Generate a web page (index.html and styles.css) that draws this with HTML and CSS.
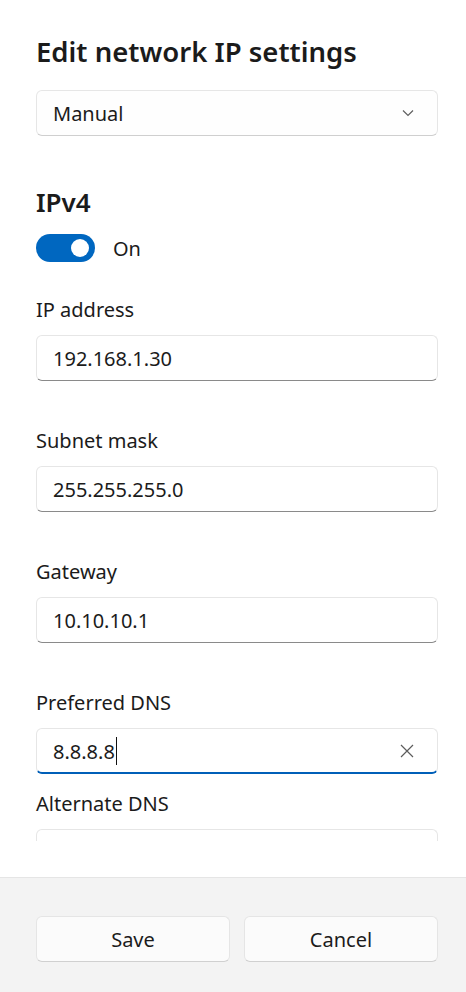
FILE: index.html
```html
<!DOCTYPE html>
<html lang="en">
<head>
<meta charset="utf-8">
<title>Edit network IP settings</title>
<link rel="stylesheet" href="styles.css">
</head>
<body>
<div class="dialog">
  <div class="content">
    <h1 class="title">Edit network IP settings</h1>
    <div class="select">
      <span>Manual</span>
      <svg class="chevron" width="12" height="8" viewBox="0 0 12 8"><path d="M1 1.5 L6 6.5 L11 1.5" fill="none" stroke="#5f5f5f" stroke-width="1.2"/></svg>
    </div>
    <h2 class="section">IPv4</h2>
    <div class="toggle-row">
      <span class="toggle"><span class="knob"></span></span>
      <span class="toggle-label">On</span>
    </div>
    <div class="field">
      <div class="label">IP address</div>
      <div class="input">192.168.1.30</div>
    </div>
    <div class="field">
      <div class="label">Subnet mask</div>
      <div class="input">255.255.255.0</div>
    </div>
    <div class="field">
      <div class="label">Gateway</div>
      <div class="input">10.10.10.1</div>
    </div>
    <div class="field field-focus">
      <div class="label">Preferred DNS</div>
      <div class="input focused"><span class="value">8.8.8.8</span><span class="caret"></span>
        <svg class="clear" width="14" height="14" viewBox="0 0 14 14"><path d="M1 1 L13 13 M13 1 L1 13" fill="none" stroke="#5c5c5c" stroke-width="1.2"/></svg>
      </div>
    </div>
    <div class="field">
      <div class="label">Alternate DNS</div>
      <div class="input"></div>
    </div>
  </div>
  <div class="spacer"></div>
  <div class="footer">
    <button class="btn">Save</button>
    <button class="btn">Cancel</button>
  </div>
</div>
</body>
</html>
```
FILE: styles.css
```css
html, body {
  margin: 0;
  padding: 0;
  background: #ffffff;
}
body {
  font-family: "Noto Sans", "Open Sans", sans-serif;
  color: #1b1b1b;
  font-size: 20px;
}
.dialog {
  width: 466px;
  height: 992px;
  display: flex;
  flex-direction: column;
  overflow: hidden;
}
.content {
  height: 841px;
  overflow: hidden;
  padding: 0 28px 0 36px;
  display: flex;
  flex-direction: column;
  flex-shrink: 0;
  box-sizing: border-box;
}
.content > * {
  flex-shrink: 0;
}
.title {
  margin: 32px 0 0 0;
  font-size: 27.5px;
  font-weight: 600;
  line-height: 40px;
}
.select {
  margin-top: 18px;
  height: 46px;
  box-sizing: border-box;
  border: 1px solid #e6e6e6;
  border-bottom-color: #cfcfcf;
  border-radius: 6px;
  background: #fefefe;
  display: flex;
  align-items: center;
  justify-content: space-between;
  padding: 0 23px 0 16px;
}
.chevron {
  display: block;
}
.section {
  margin: 48px 0 0 0;
  font-size: 26px;
  font-weight: 600;
  line-height: 36px;
}
.toggle-row {
  margin-top: 14px;
  height: 28px;
  display: flex;
  align-items: center;
  gap: 18px;
}
.toggle {
  width: 59px;
  height: 28px;
  border-radius: 14px;
  background: #0067c0;
  display: flex;
  align-items: center;
  justify-content: flex-end;
  padding-right: 6px;
  box-sizing: border-box;
}
.knob {
  width: 18px;
  height: 18px;
  border-radius: 50%;
  background: #ffffff;
}
.field {
  margin-top: 34px;
  display: flex;
  flex-direction: column;
}
.field + .field {
  margin-top: 46px;
}
.field-focus + .field {
  margin-top: 16px;
}
.label {
  line-height: 28px;
  height: 28px;
}
.input {
  margin-top: 11px;
  height: 46px;
  flex-shrink: 0;
  box-sizing: border-box;
  border: 1px solid #e6e6e6;
  border-bottom-color: #8a8a8a;
  border-radius: 6px;
  background: #ffffff;
  padding: 0 16px;
  display: flex;
  align-items: center;
}
.input.focused {
  border-bottom: 2px solid #005fb8;
  padding-top: 1px;
}
.value {
  white-space: pre;
}
.caret {
  width: 1.5px;
  height: 28px;
  background: #111;
  margin-left: 1px;
}
.clear {
  margin-left: auto;
  margin-right: 7px;
}
.spacer {
  height: 36px;
  flex-shrink: 0;
  border-bottom: 1px solid #e5e5e5;
}
.footer {
  flex: 1;
  background: #f3f3f3;
  display: flex;
  gap: 14px;
  padding: 38px 28px 0 36px;
  align-items: flex-start;
}
.btn {
  flex: 1;
  height: 46px;
  border: 1px solid #e5e5e5;
  border-bottom-color: #d0d0d0;
  border-radius: 6px;
  background: #fbfbfb;
  font-family: inherit;
  font-size: 20px;
  color: #1b1b1b;
  padding: 0;
}
```
